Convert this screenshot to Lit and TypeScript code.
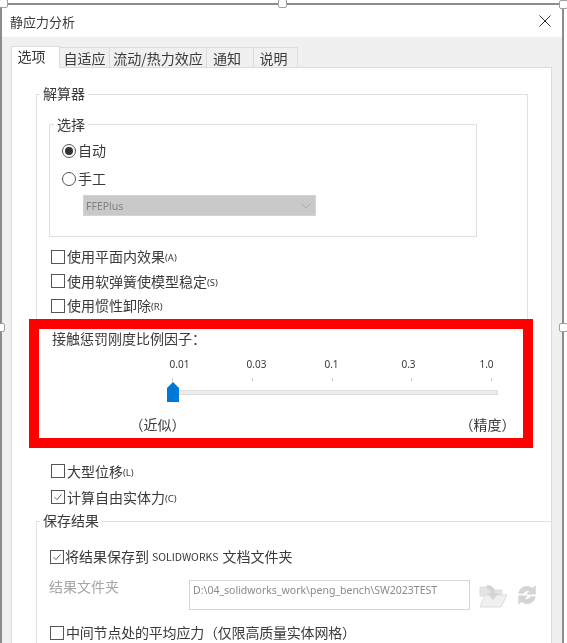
import { LitElement, html, css } from "lit";
import { customElement } from "lit/decorators.js";

const check = html`<svg class="tick" viewBox="0 0 14 14"><path d="M3 7.2 L5.8 10 L11 4" fill="none" stroke="#555" stroke-width="1.1"/></svg>`;

@customElement("app-root")
export class AppRoot extends LitElement {
  static styles = css`
    :host {
      display: block;
      width: 567px;
      height: 643px;
      overflow: hidden;
      background: #fff;
      position: relative;
      font-family: "Noto Sans CJK SC", "Liberation Sans", sans-serif;
      font-size: 14px;
      color: #3a3a3a;
    }
    * { box-sizing: border-box; }
    .page { height: 643px; padding: 3px 3px 0 0; filter: blur(0.35px); }
    .dialog {
      height: 640px; border-top: 2px solid #8c8c8c; border-left: 2px solid #8c8c8c; border-right: 2px solid #8c8c8c;
      display: flex; flex-direction: column; background: #f0f0f0;
    }
    .title { flex: none; height: 32px; background: #fff; display: flex; align-items: center; justify-content: space-between; padding: 0 11px 0 8px; font-size: 13px; }
    .body { flex: 1; padding: 9px 10px 0 9px; min-height: 0; display: flex; flex-direction: column; }
    .tabs { display: flex; height: 21px; flex: none; align-items: flex-end; position: relative; z-index: 1; }
    .tab { height: 20px; padding-top: 1px; border: 1px solid #dcdcdc; border-bottom: none; border-left: none; text-align: center; font-size: 14px; line-height: 18px; background: #f0f0f0; white-space: nowrap; }
    .tab.on { height: 22px; padding-top: 0; padding-right: 8px; background: #fff; margin-bottom: -1px; border-left: 1px solid #dcdcdc; line-height: 19px; }
    .t1 { width: 49px; } .t2 { width: 50px; } .t3 { width: 97px; } .t4 { width: 47px; padding-right: 6px; } .t5 { width: 44px; padding-right: 4px; }
    .pane { flex: 1; min-height: 0; background: #fff; border: 1px solid #dcdcdc; border-bottom: none; padding: 26px 23px 0 24px; }
    .group { border: 1px solid #e0e0e0; position: relative; }
    .legend { position: absolute; top: -11px; background: #fff; padding: 0 3px; font-size: 14px; line-height: 18px; }
    .solver { height: 231px; padding: 29px 50px 0 12px; }
    .solver .legend { left: 3px; }
    .choice { height: 113px; padding: 16px 0 0 12px; }
    .choice .legend { left: 4px; top: -10px; }
    .row { display: flex; align-items: center; height: 19px; line-height: 19px; white-space: nowrap; }
    .radio { width: 14px; height: 14px; border-radius: 50%; border: 1px solid #555; margin-right: 2px; display: flex; align-items: center; justify-content: center; flex: none; background: #fff; }
    .radio.on::after { content: ""; width: 8px; height: 8px; border-radius: 50%; background: #333; }
    .radio-row2 { margin-top: 9px; }
    .select { margin: 7px 0 0 21px; width: 233px; height: 21px; background: #c9c9c9; border: 1px solid #d4d4d4; font-size: 10.5px; color: #808080; display: flex; align-items: center; justify-content: space-between; padding: 0 4px 0 2px; font-family: "Noto Sans", sans-serif; }
    .box { width: 14px; height: 14px; border: 1px solid #555; margin-right: 2px; flex: none; background: #fff; }
    .tick { display: block; width: 12px; height: 12px; }
    .small { font-size: 9.5px; font-family: "Noto Sans", sans-serif; align-self: flex-end; line-height: 16px; }
    .checks { margin: 10px 0 0 2px; display: flex; flex-direction: column; gap: 5.5px; }
    .contact { height: 117px; margin-top: 3.5px; padding-left: 16px; font-size: 14px; line-height: 19px; }
    .labels { display: grid; grid-template-columns: 77px 75px 77px 78px 40px; margin: 9.5px 0 0 107.5px; font-size: 10px; line-height: 14px; font-family: "Noto Sans", sans-serif; }
    .labels span { width: 40px; text-align: center; }
    .marks { display: flex; justify-content: space-between; width: 320px; height: 3px; margin: 7px 0 0 120px; }
    .marks i { display: block; width: 1px; height: 3px; background: #c8c8c8; }
    .track-wrap { margin: 1px 0 0 115px; width: 331px; height: 20px; position: relative; }
    .track { position: absolute; left: 8px; right: 0; top: 8px; height: 5px; background: #ececec; border: 1px solid #dedede; }
    .thumb { position: absolute; left: 0; top: 0; width: 12px; height: 20px; display: block; }
    .ends { display: flex; justify-content: space-between; width: 386px; margin: 13px 0 0 77.5px; font-size: 14px; line-height: 18px; }
    .after { margin: 16px 0 0 15px; display: flex; flex-direction: column; gap: 7px; }
    .save-wrap { margin-top: 14.5px; }
    .save { height: 200px; margin-right: -23px; border-right: none; border-bottom: none; }
    .save .legend { left: 3px; }
    .save-in { padding: 25px 0 0 13px; }
    .first .box { margin-right: 1px; }
    .sw { font-size: 10.5px; margin: 0 4px 0 3px; }
    .folder { display: flex; margin-top: 14px; }
    .folder-label { color: #a6a6a6; width: 140px; margin: -3px 0 0 -1px; line-height: 19px; height: 19px; }
    .path { width: 281px; height: 30px; border: 1px solid #d6d6d6; font-size: 10.5px; color: #8a8a8a; padding: 1px 0 0 3px; font-family: "Noto Sans", sans-serif; line-height: 16px; white-space: nowrap; }
    .icons { display: flex; gap: 9px; margin-left: 9px; padding-top: 4px; align-items: flex-start; }
    .refresh path { stroke: #d4d4d4; stroke-width: 1; }
    .last { margin-top: 13px; letter-spacing: -0.2px; }
    .frame { position: absolute; left: 29px; top: 319px; width: 504px; height: 129px; border: 10px solid #ff0000; }
    .handle { position: absolute; width: 9px; height: 9px; background: #fff; border: 1px solid #a0a0a0; border-radius: 2px; }
    .h1 { left: -1px; top: -1px; } .h2 { left: 278px; top: -1px; } .h3 { left: 559px; top: 0; } .h4 { left: 559px; top: 323px; } .h5 { left: -4px; top: 323px; }
  `;

  render() {
    return html`
      <div class="page">
        <div class="dialog">
          <div class="title">
            <span>静应力分析</span>
            <svg width="12" height="12" viewBox="0 0 12 12"><path d="M.5.5l11 11M11.5.5l-11 11" stroke="#333" fill="none"/></svg>
          </div>
          <div class="body">
            <div class="tabs">
              <div class="tab on t1">选项</div>
              <div class="tab t2">自适应</div>
              <div class="tab t3">流动/热力效应</div>
              <div class="tab t4">通知</div>
              <div class="tab t5">说明</div>
            </div>
            <div class="pane">
              <div class="group solver">
                <span class="legend">解算器</span>
                <div class="group choice">
                  <span class="legend">选择</span>
                  <div class="row"><span class="radio on"></span>自动</div>
                  <div class="row radio-row2"><span class="radio"></span>手工</div>
                  <div class="select"><span>FFEPlus</span>
                    <svg width="10" height="6" viewBox="0 0 10 6"><path d="M.5.5 5 5 9.5.5" stroke="#aaa" fill="none"/></svg>
                  </div>
                </div>
                <div class="checks">
                  <div class="row"><span class="box"></span>使用平面内效果<span class="small">(A)</span></div>
                  <div class="row"><span class="box"></span>使用软弹簧使模型稳定<span class="small">(S)</span></div>
                  <div class="row"><span class="box"></span>使用惯性卸除<span class="small">(R)</span></div>
                </div>
              </div>
              <div class="contact">
                接触惩罚刚度比例因子：
                <div class="labels">
                  ${["0.01", "0.03", "0.1", "0.3", "1.0"].map((t) => html`<span>${t}</span>`)}
                </div>
                <div class="marks"><i></i><i></i><i></i><i></i><i></i></div>
                <div class="track-wrap">
                  <div class="track"></div>
                  <svg class="thumb" viewBox="0 0 12 20"><path d="M0 6 6 0l6 6v14H0z" fill="#0078d7"/></svg>
                </div>
                <div class="ends"><span>（近似）</span><span>（精度）</span></div>
              </div>
              <div class="after">
                <div class="row"><span class="box"></span>大型位移<span class="small">(L)</span></div>
                <div class="row"><span class="box">${check}</span>计算自由实体力<span class="small">(C)</span></div>
              </div>
              <div class="save-wrap">
                <div class="group save">
                  <span class="legend">保存结果</span>
                  <div class="save-in">
                    <div class="row first"><span class="box">${check}</span>将结果保存到<span class="sw">SOLIDWORKS</span>文档文件夹</div>
                    <div class="folder">
                      <div class="folder-label">结果文件夹</div>
                      <div class="path">D:\\04_solidworks_work\\peng_bench\\SW2023TEST</div>
                      <div class="icons">
                        <svg width="28" height="24" viewBox="0 0 28 24"><path d="M1 3h7v3h15v6H1z" fill="#e4e4e4" stroke="#dcdcdc"/><path d="M6 11h22l-6 12H1z" fill="#f0f0f0" stroke="#dcdcdc"/><path d="M8 1c5 0 8 3 8 8h4l-6 7-6-7h4c0-2-2-4-4-4z" fill="#d4d4d4"/></svg>
                        <svg class="refresh" width="22" height="22" viewBox="0 0 24 24"><path d="M3 10a9 9 0 0 1 15-5l3-3v9h-9l3-3a5 5 0 0 0-7 2z" fill="#d4d4d4"/><path d="M21 14a9 9 0 0 1-15 5l-3 3v-9h9l-3 3a5 5 0 0 0 7-2z" fill="#d4d4d4"/></svg>
                      </div>
                    </div>
                    <div class="row last"><span class="box"></span>中间节点处的平均应力（仅限高质量实体网格）</div>
                  </div>
                </div>
              </div>
            </div>
          </div>
        </div>
      </div>
      <div class="frame"></div>
      <div class="handle h1"></div><div class="handle h2"></div><div class="handle h3"></div><div class="handle h4"></div><div class="handle h5"></div>
    `;
  }
}
